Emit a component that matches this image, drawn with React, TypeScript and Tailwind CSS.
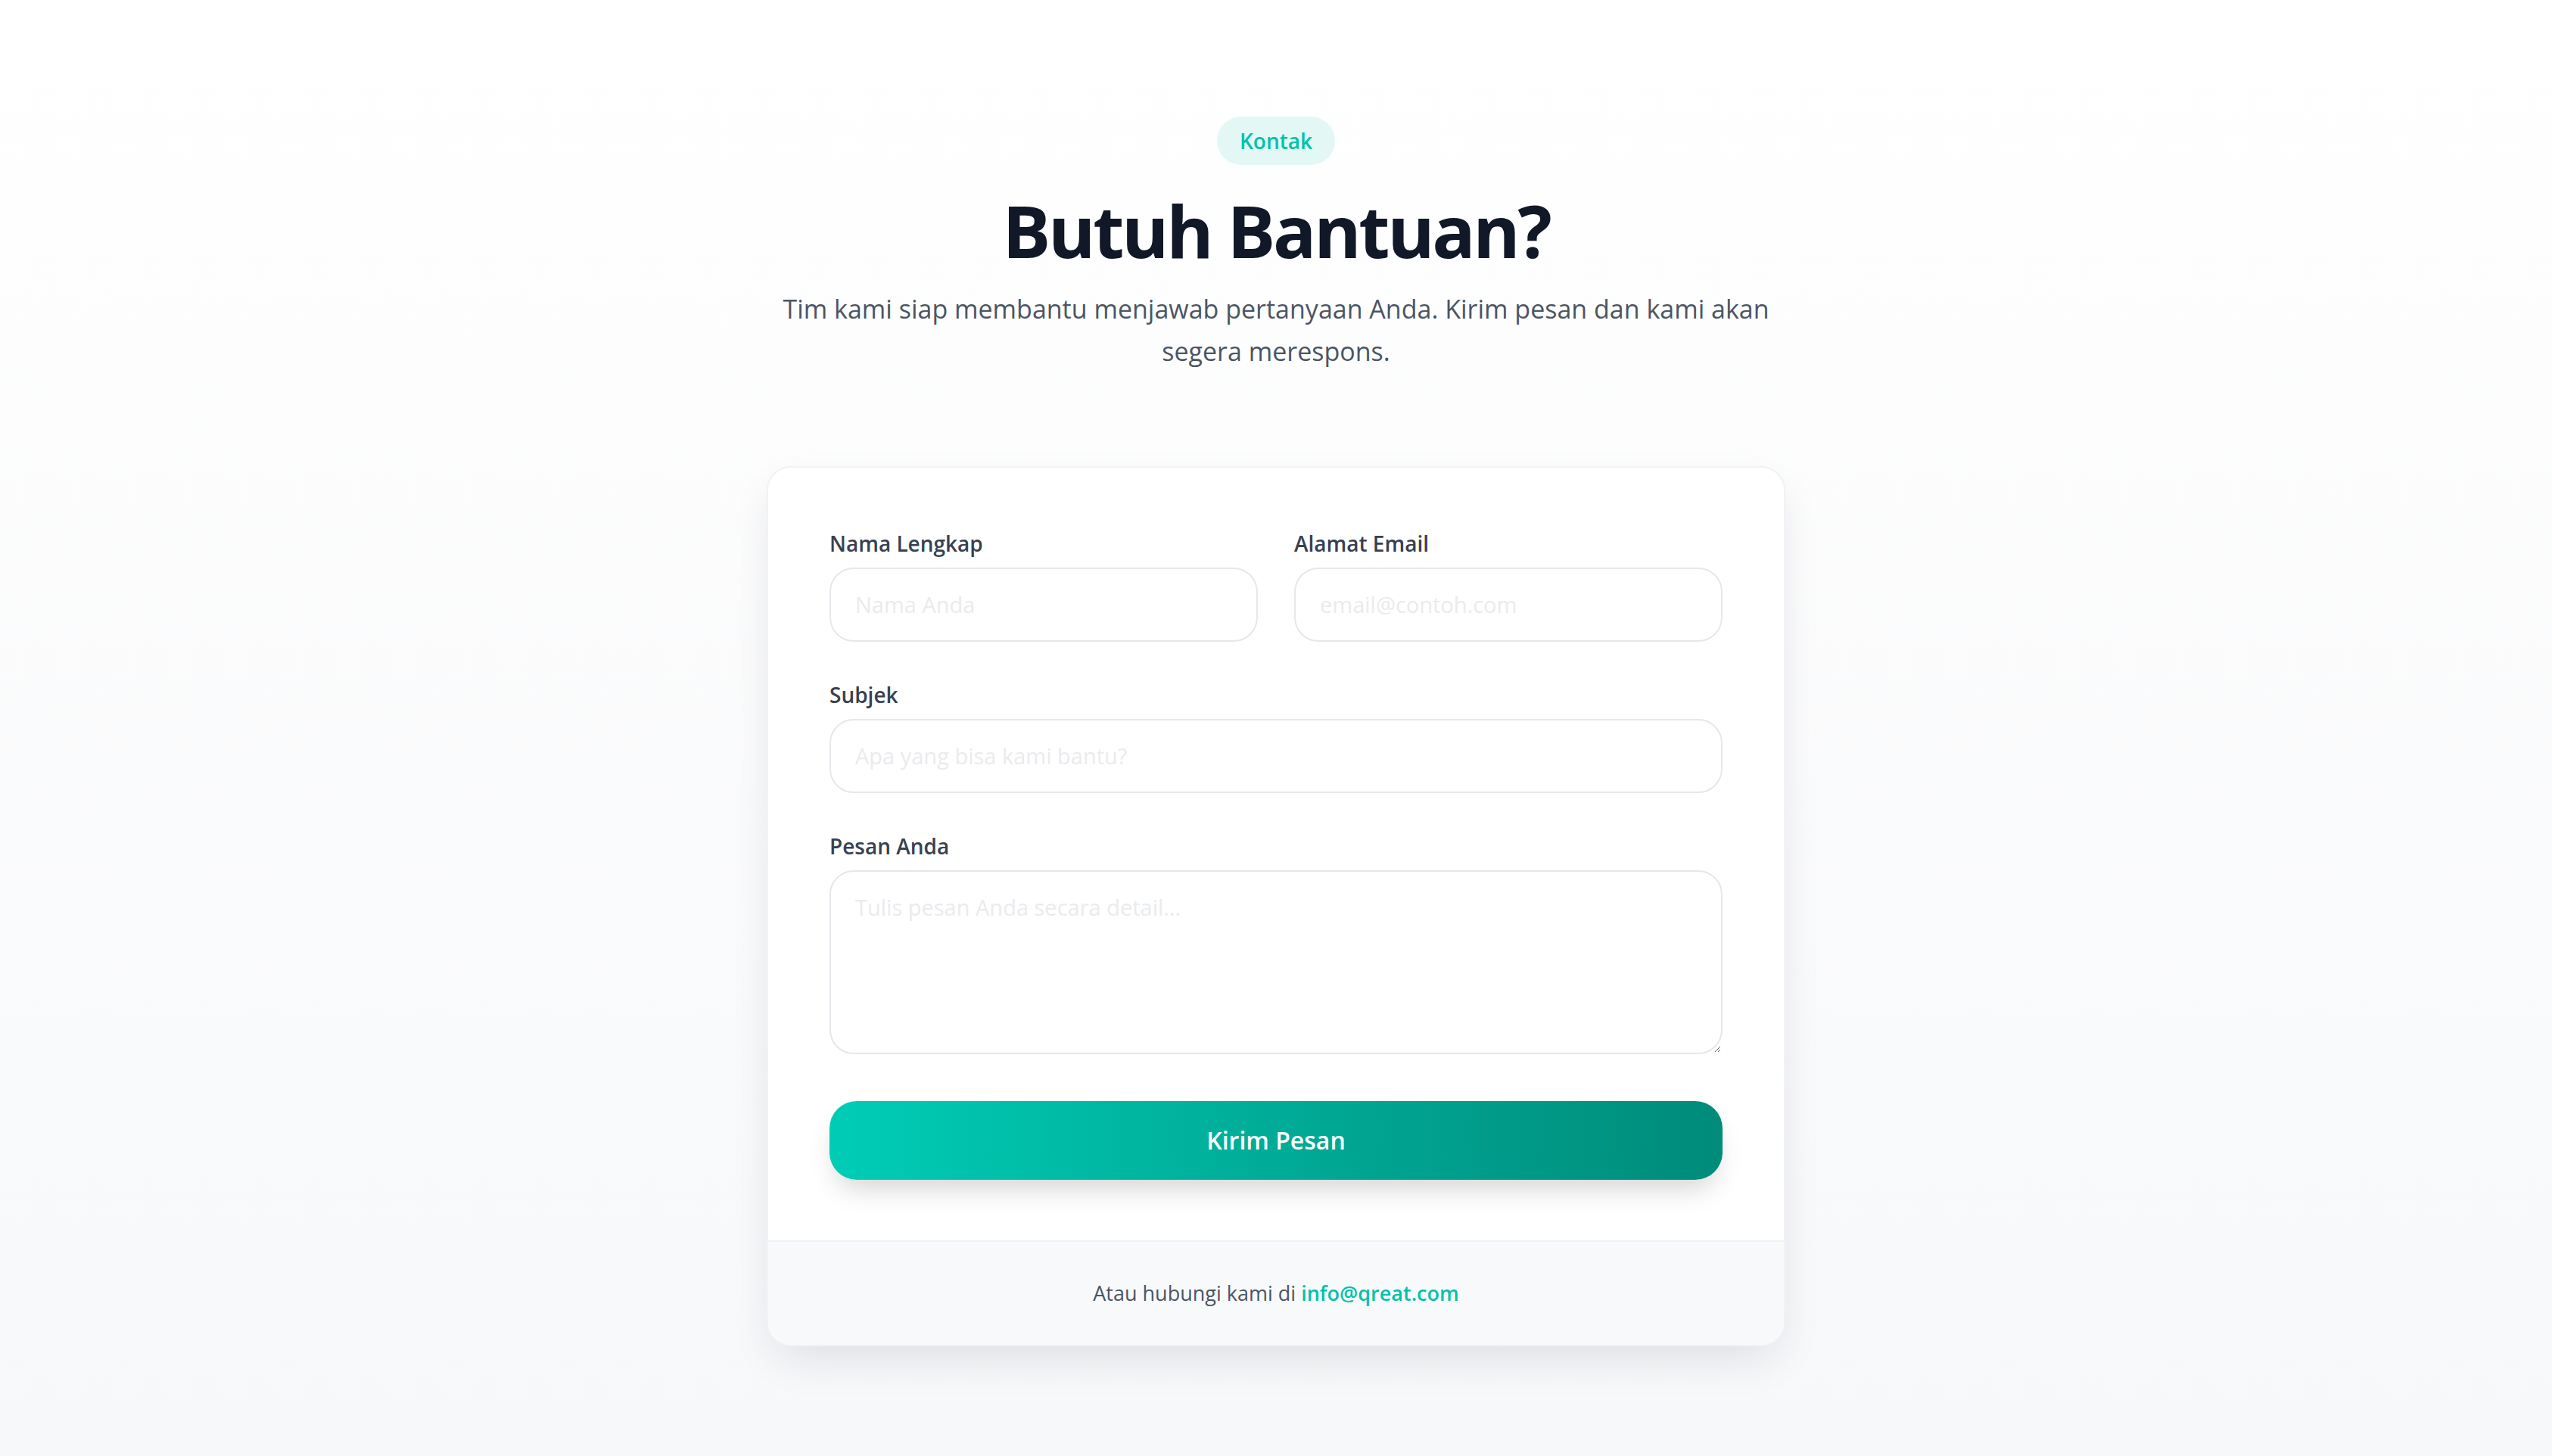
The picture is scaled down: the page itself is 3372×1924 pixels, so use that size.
function Field({ label, children }: { label: string; children: React.ReactNode }) {
  return (
    <div className="flex flex-col">
      <label className="mb-3 block text-[28px] font-semibold leading-10 text-[#374151]">{label}</label>
      {children}
    </div>
  );
}

const inputClass =
  "w-full rounded-[32px] border-2 border-[#e5e7eb] bg-white px-8 py-[23px] text-[29px] leading-[48px] text-[#111827] outline-none placeholder:text-[#eaebee]";

export default function App() {
  return (
    <main className="min-h-screen bg-linear-to-b from-white to-[#f7f8fa] pb-[148px] pt-[154px] font-['Open_Sans',sans-serif]">
      <div className="mx-auto flex max-w-[1344px] flex-col items-center text-center">
        <span className="rounded-full bg-[#e3f8f5] px-[30px] py-3 text-[28px] font-semibold leading-10 text-[#00c2ab]">
          Kontak
        </span>
        <h1 className="mt-[38px] text-[95px] font-bold leading-[96px] tracking-[-0.035em] text-[#111827]">
          Butuh Bantuan?
        </h1>
        <p className="mt-7 max-w-[1344px] text-[34px] leading-[56px] text-[#4b5563]">
          Tim kami siap membantu menjawab pertanyaan Anda. Kirim pesan dan kami akan segera merespons.
        </p>
      </div>

      <div className="mx-auto mt-[124px] w-[1346px] overflow-hidden rounded-[32px] border-2 border-[#f1f2f4] bg-white shadow-[0_24px_60px_-12px_rgba(15,23,42,0.12)]">
        <form className="flex flex-col gap-[50px] px-[81px] py-20" onSubmit={(e) => e.preventDefault()}>
          <div className="grid grid-cols-2 gap-12">
            <Field label="Nama Lengkap">
              <input className={inputClass} placeholder="Nama Anda" />
            </Field>
            <Field label="Alamat Email">
              <input className={inputClass} type="email" placeholder="email@contoh.com" />
            </Field>
          </div>
          <Field label="Subjek">
            <input className={inputClass} placeholder="Apa yang bisa kami bantu?" />
          </Field>
          <Field label="Pesan Anda">
            <textarea className={inputClass + " h-[243px]"} placeholder="Tulis pesan Anda secara detail..." />
          </Field>
          <button
            type="submit"
            className="mt-3 w-full rounded-[36px] bg-linear-to-r from-[#00cdb6] to-[#008b7a] py-8 text-[32px] font-semibold leading-10 text-white shadow-[0_20px_36px_-10px_rgba(0,0,0,0.18)]"
          >
            Kirim Pesan
          </button>
        </form>
        <div className="border-t-2 border-[#f1f2f4] bg-[#f8f9fb] py-12 text-center text-[27px] leading-10 text-[#4b5563]">
          Atau hubungi kami di <a className="font-semibold text-[#00c2ab]" href="#">info@qreat.com</a>
        </div>
      </div>
    </main>
  );
}
